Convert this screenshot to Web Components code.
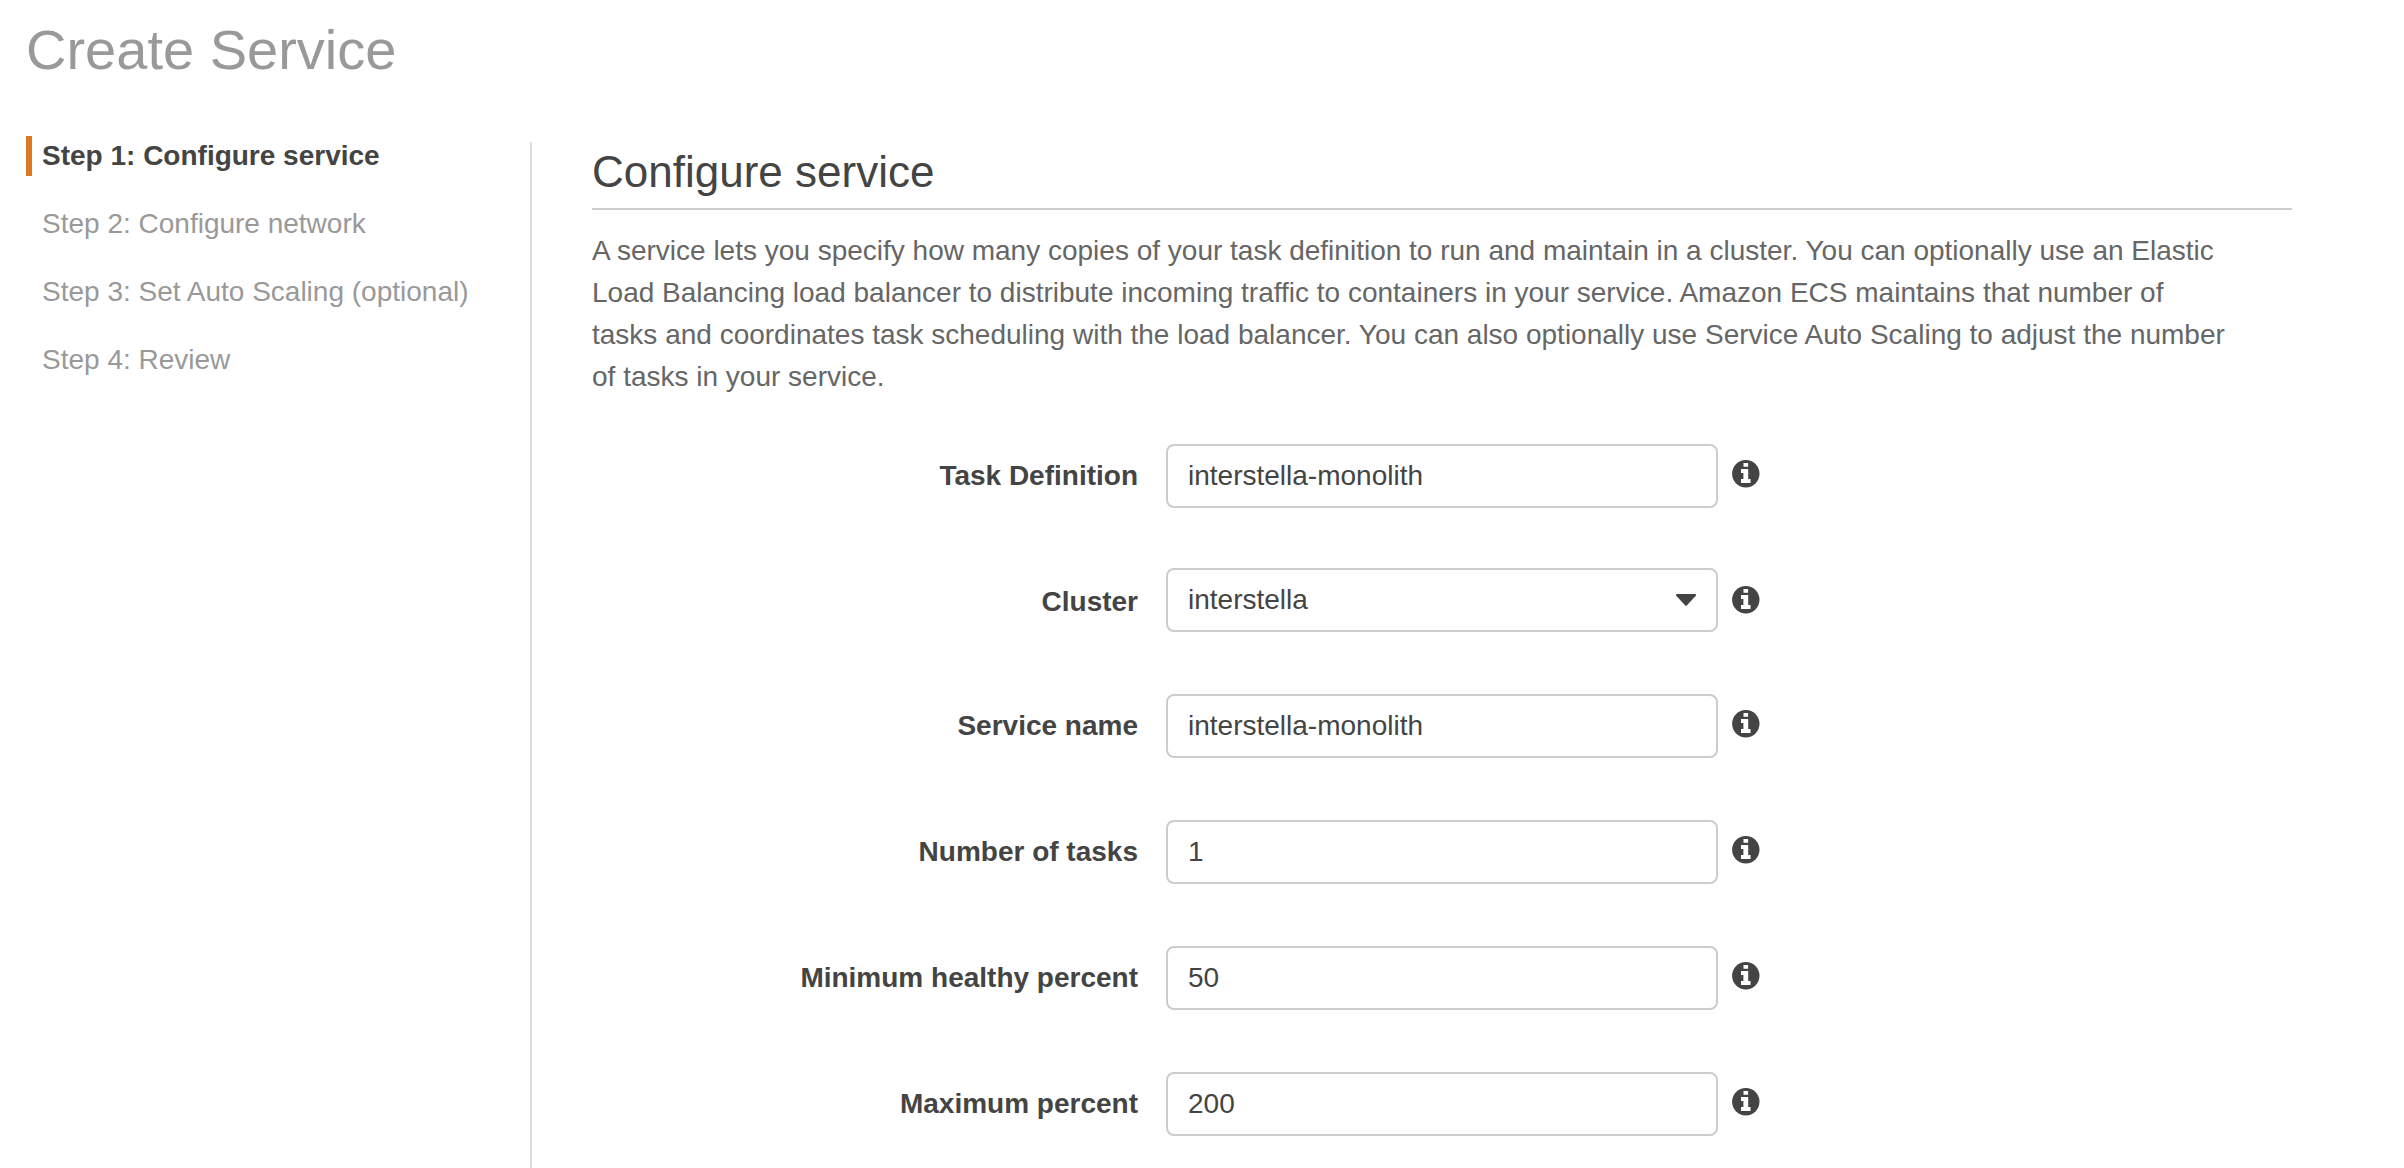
<!DOCTYPE html>
<html lang="en">
<head>
<meta charset="utf-8">
<meta name="viewport" content="width=device-width, initial-scale=1">
<title>Create Service</title>
<style>
  body {
    margin: 0;
    background: #fff;
    color: #444;
    font: 28px/42px "Liberation Sans", Arial, sans-serif;
  }
</style>
</head>
<body>
<wizard-page heading="Create Service">
  <wizard-steps slot="steps">
    <wizard-step href="#step-1" current>Step 1: Configure service</wizard-step>
    <wizard-step href="#step-2">Step 2: Configure network</wizard-step>
    <wizard-step href="#step-3">Step 3: Set Auto Scaling (optional)</wizard-step>
    <wizard-step href="#step-4">Step 4: Review</wizard-step>
  </wizard-steps>
  <form-section heading="Configure service">
    <span slot="description">A service lets you specify how many copies of your task definition to run and maintain in a cluster. You can optionally use an Elastic Load Balancing load balancer to distribute incoming traffic to containers in your service. Amazon ECS maintains that number of tasks and coordinates task scheduling with the load balancer. You can also optionally use Service Auto Scaling to adjust the number of tasks in your service.</span>
    <form-field label="Task Definition" value="interstella-monolith"></form-field>
    <form-field label="Cluster" value="interstella" kind="select"></form-field>
    <form-field label="Service name" value="interstella-monolith"></form-field>
    <form-field label="Number of tasks" value="1"></form-field>
    <form-field label="Minimum healthy percent" value="50"></form-field>
    <form-field label="Maximum percent" value="200"></form-field>
  </form-section>
</wizard-page>

<script>
  class BaseElement extends HTMLElement {
    connectedCallback() {
      if (this.shadowRoot) return;
      this.attachShadow({ mode: "open" }).innerHTML = this.render();
    }
  }

  customElements.define("wizard-page", class extends BaseElement {
    render() {
      return `
        <style>
          :host { display: flex; flex-direction: column; min-height: 100vh; }
          h1 { margin: 0; padding: 18px 26px 0; color: #999; font-size: 56px; line-height: 64px; font-weight: 400; }
          .columns { flex: 1; display: flex; padding: 54px 112px 0 26px; }
          nav { flex: none; width: 504px; }
          main { flex: 1; min-width: 0; margin-top: 6px; padding-left: 60px; border-left: 2px solid #ddd; }
        </style>
        <h1>${this.getAttribute("heading")}</h1>
        <div class="columns">
          <nav aria-label="Steps"><slot name="steps"></slot></nav>
          <main><slot></slot></main>
        </div>`;
    }
  });

  customElements.define("wizard-steps", class extends BaseElement {
    render() {
      return `
        <style>:host { display: flex; flex-direction: column; gap: 28px; }</style>
        <slot></slot>`;
    }
  });

  customElements.define("wizard-step", class extends BaseElement {
    render() {
      const current = this.hasAttribute("current") ? ' aria-current="step"' : "";
      return `
        <style>
          :host { display: block; line-height: 40px; }
          a { display: block; padding-left: 10px; border-left: 6px solid transparent; color: #999; text-decoration: none; }
          a[aria-current] { border-color: #dd7722; color: #444; font-weight: 700; }
        </style>
        <a href="${this.getAttribute("href")}"${current}><slot></slot></a>`;
    }
  });

  customElements.define("form-section", class extends BaseElement {
    render() {
      return `
        <style>
          :host { display: block; }
          h2 { margin: 0; padding: 4px 0 10px; border-bottom: 2px solid #ccc; font-size: 44px; line-height: 52px; font-weight: 400; }
          p { margin: 0; padding: 20px 62px 46px 0; color: #666; }
          form { display: flex; flex-direction: column; gap: 62px; padding-bottom: 32px; }
        </style>
        <h2>${this.getAttribute("heading")}</h2>
        <p><slot name="description"></slot></p>
        <form><slot></slot></form>`;
    }
  });

  customElements.define("form-field", class extends BaseElement {
    render() {
      const label = this.getAttribute("label");
      const value = this.getAttribute("value");
      const control = this.getAttribute("kind") === "select"
        ? `<div class="select">
             <select id="control"><option>${value}</option></select>
             <svg class="caret" viewBox="0 0 20 12" aria-hidden="true"><path d="M1 0h18q1 0 1 1v.6L11 11.300q-1 1-2 0L0 1.600V1q0-1 1-1z"/></svg>
           </div>`
        : `<input id="control" type="text" value="${value}">`;
      return `
        <style>
          :host {
            display: grid;
            grid-template-columns: minmax(0, 574fr) minmax(0, 552fr) minmax(0, 574fr);
            align-items: start;
          }
          label { padding: 11px 28px 0 0; font-weight: 700; text-align: right; }
          input, select {
            display: block; box-sizing: border-box; width: 100%; height: 64px; margin: 0; padding: 0 20px;
            border: 2px solid #ccc; border-radius: 8px; background: #fff; color: inherit; font: inherit;
            appearance: none;
          }
          .select { position: relative; margin-top: -2px; }
          .caret { position: absolute; right: 22px; top: 26px; width: 20px; height: 12px; fill: #444; pointer-events: none; }
          button { width: 28px; height: 28px; margin: 16px 0 0 14px; padding: 0; border: 0; background: none; }
          button svg { display: block; width: 28px; height: 28px; }
        </style>
        <label for="control">${label}</label>
        ${control}
        <button type="button" aria-label="About ${label}">
          <svg viewBox="0 0 28 28" aria-hidden="true">
            <circle cx="13.800" cy="13.800" r="13.700" fill="#444"/>
            <path fill="#fff" d="M11.500 3h4.600v3.800h-4.600zM9 9h7.200v10h2.300v4H9v-4h2.400v-6H9z"/>
          </svg>
        </button>`;
    }
  });
</script>
</body>
</html>
